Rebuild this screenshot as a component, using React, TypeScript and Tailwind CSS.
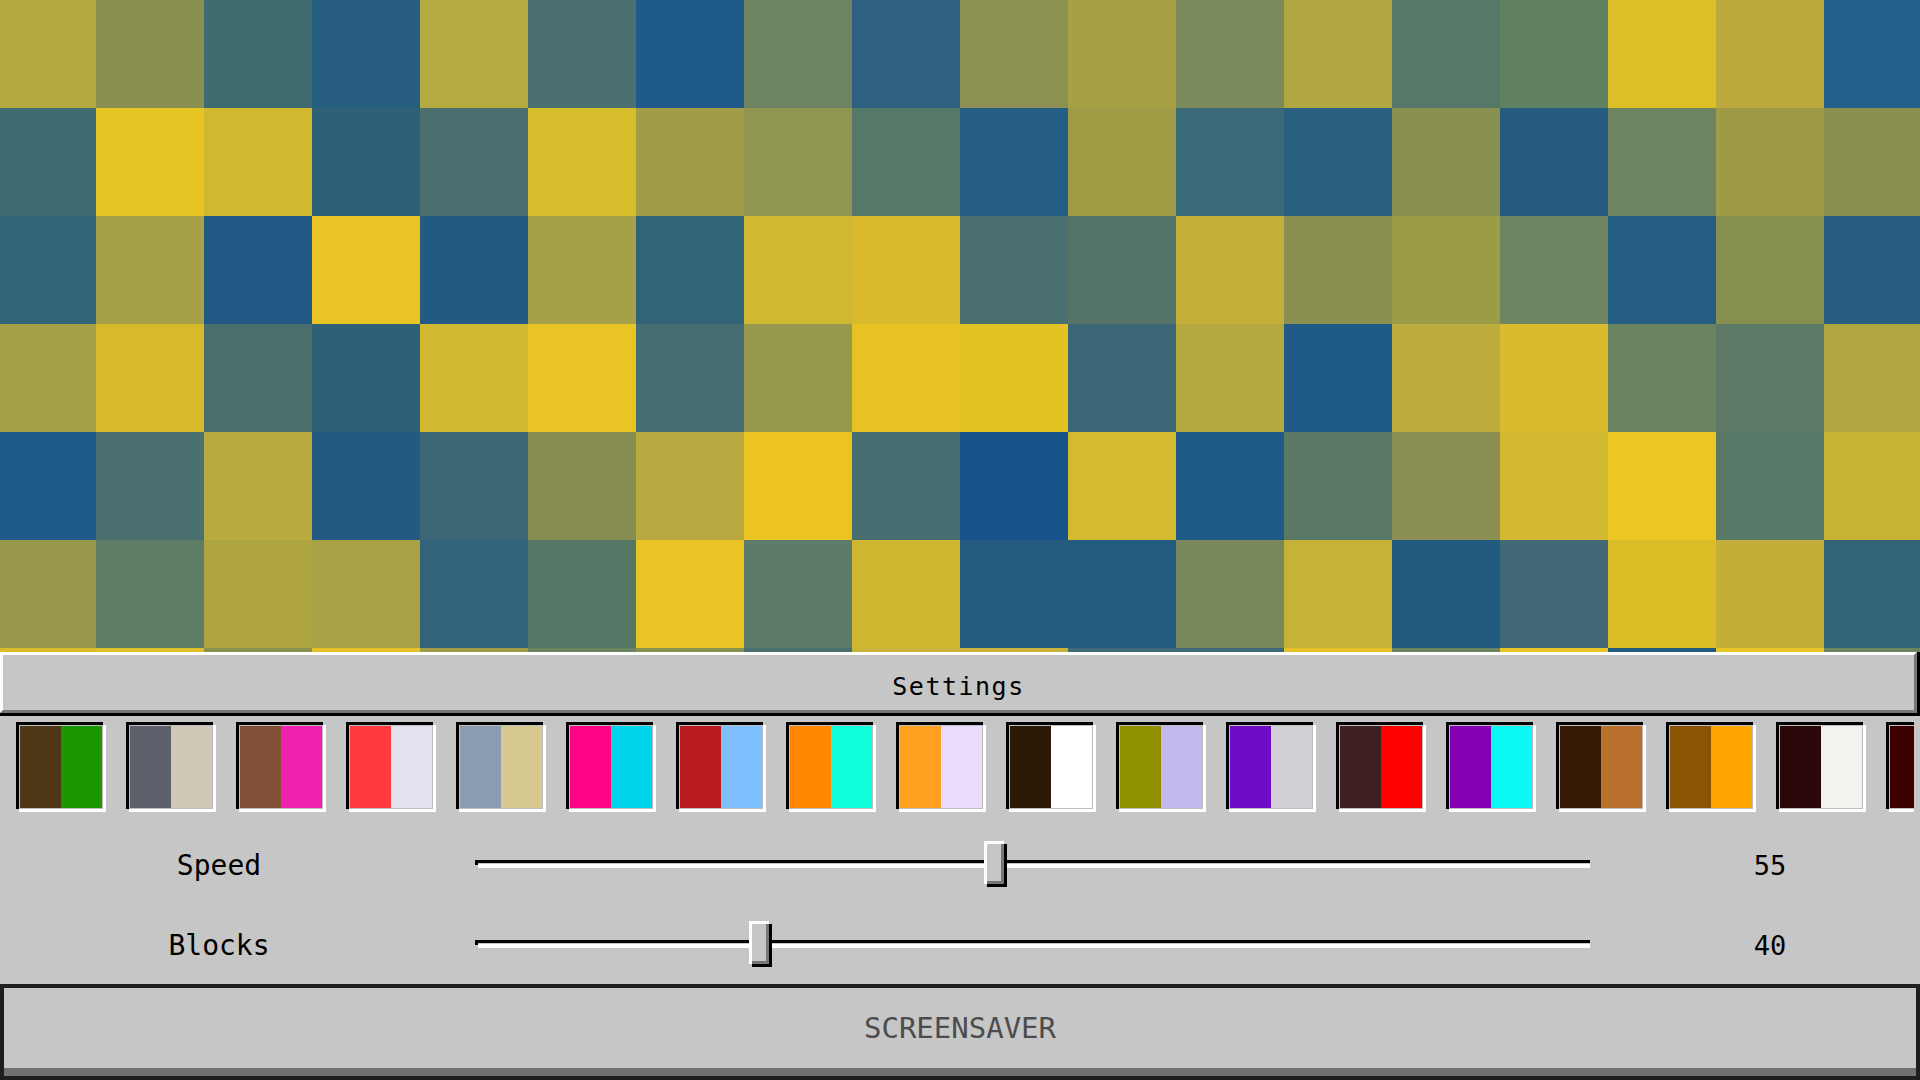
const TILES: string[][] = [
  ["#b3a840", "#8a9050", "#3e6a70", "#275d80", "#b3aa40", "#4a7070", "#1f5a88", "#6e8462", "#2e6080", "#8c9050", "#a8a045", "#7a8a5a", "#b0a642", "#567868", "#608060", "#ddbf28", "#bcab3c", "#25608a"],
  ["#3f6c72", "#e6c424", "#d0b830", "#2e6078", "#4c7070", "#d8bd2c", "#a09c48", "#909650", "#567868", "#255e84", "#a09c46", "#3a6a78", "#2a6080", "#8a9050", "#265c80", "#6e8460", "#a09a48", "#8a9050"],
  ["#306478", "#a6a048", "#205a84", "#eac424", "#225a84", "#a6a048", "#326478", "#d0b830", "#d8ba2c", "#4a7070", "#547468", "#c4b038", "#8a9050", "#9c9c48", "#6e8460", "#255e84", "#889050", "#2a5e80"],
  ["#a4a048", "#d6ba2c", "#4a706c", "#2e6078", "#d0b830", "#e8c424", "#466e72", "#96984c", "#e8c222", "#e4c224", "#3a6676", "#b4a840", "#205a86", "#bcac3c", "#d8bc2c", "#6a8460", "#5c7a66", "#b0a642"],
  ["#205a88", "#4a7070", "#b8aa3e", "#225a84", "#3c6674", "#888e52", "#b8aa40", "#ecc422", "#466e70", "#17528a", "#d4ba2e", "#1f5a86", "#5a7866", "#8a8e50", "#d2b830", "#ecc622", "#587868", "#c8b234"],
  ["#97974c", "#5f7e66", "#aea440", "#a8a244", "#33637a", "#557866", "#eac424", "#5e7b69", "#cfb830", "#245b80", "#245b80", "#78885a", "#c6b236", "#235b80", "#416a76", "#dcbd28", "#c2ae38", "#33647a"],
  ["#d8bc2c", "#e0c028", "#8a9050", "#e4c228", "#a09c46", "#6a8460", "#8a9050", "#4a7070", "#c8b238", "#c8b238", "#3f6a78", "#3e6a78", "#e4c228", "#6a8460", "#e8c424", "#245b80", "#e8c424", "#6e8460"],
]

const PALETTES: [string, string][] = [
  ["#4e3714", "#1a9600"],
  ["#5c616b", "#cfc9b5"],
  ["#834e36", "#f020b0"],
  ["#ff3b3f", "#e4e2ee"],
  ["#8a9db0", "#d6c88e"],
  ["#ff0484", "#00d3ec"],
  ["#b81c20", "#7fc0ff"],
  ["#ff8800", "#10ffdc"],
  ["#ffa020", "#eadcfc"],
  ["#2c1a06", "#ffffff"],
  ["#919100", "#c2b8ec"],
  ["#6e0cc6", "#d2d0d6"],
  ["#3e2022", "#ff0000"],
  ["#8400b4", "#0cf8f4"],
  ["#361a06", "#b8702c"],
  ["#8a5404", "#ffa400"],
  ["#2a080a", "#f2f2ee"],
  ["#3c0000", "#3c0000"],
]

function Swatch({ left, right }: { left: string; right: string }) {
  return (
    <div className="grid shrink-0 w-[90px] h-[90px]">
      <div className="[grid-area:1/1] w-[87px] h-[87px] bg-black" />
      <div className="[grid-area:1/1] w-[87px] h-[87px] bg-white self-end justify-self-end" />
      <div className="[grid-area:1/1] w-[84px] h-[84px] mt-[3px] ml-[3px] border border-[#bebebe] flex">
        <div className="flex-1" style={{ backgroundColor: left }} />
        <div className="flex-1" style={{ backgroundColor: right }} />
      </div>
    </div>
  )
}

function Slider({ label, value, offset }: { label: string; value: number; offset: number }) {
  return (
    <div className="flex items-center h-[46px]">
      <div className="w-[438px] pt-[4px] text-center text-[28px] leading-none text-black">{label}</div>
      {/* track */}
      <div className="relative ml-[37px] w-[1115px] h-[46px] flex items-center">
        <div className="flex flex-col w-full">
          <div className="h-[3px] bg-black" />
          <div className="h-[1px] w-[3px] bg-black" />
          <div className="h-[1px] flex">
            <div className="w-[3px] bg-black" />
            <div className="flex-1 bg-white" />
          </div>
          <div className="h-[3px] ml-[3px] bg-white" />
        </div>
        {/* thumb */}
        <div className="absolute top-0 grid w-[23px] h-[46px]" style={{ left: offset }}>
          <div className="[grid-area:1/1] w-[20px] h-[43px] bg-white" />
          <div className="[grid-area:1/1] w-[20px] h-[43px] bg-black self-end justify-self-end" />
          <div className="[grid-area:1/1] w-[17px] h-[40px] mt-[3px] ml-[3px] bg-[#c6c6c6] border-r-[3px] border-b-[3px] border-[#777777]" />
        </div>
      </div>
      <div className="ml-[90px] w-[180px] pt-[2px] text-center text-[27px] leading-none text-black">{value}</div>
    </div>
  )
}

export default function App() {
  return (
    <div className="w-[1920px] h-[1080px] overflow-hidden flex flex-col bg-[#c6c6c6] font-['DejaVu_Sans_Mono',monospace]">
      {/* block canvas */}
      <div className="h-[652px] shrink-0 overflow-hidden">
        <div className="-ml-[12px] grid grid-cols-[repeat(18,108px)] auto-rows-[108px] w-[1944px]">
          {TILES.flatMap((row, r) =>
            row.map((c, i) => <div key={`${r}-${i}`} style={{ backgroundColor: c }} />)
          )}
        </div>
      </div>

      {/* settings panel */}
      <div className="flex-1 flex flex-col">
        <div className="h-[64px] flex border-r-[3px] border-b-[3px] border-black">
          <div className="flex-1 flex items-center justify-center pt-[7px] border-[3px] border-t-white border-l-white border-r-[#777777] border-b-[#777777]">
            <span className="text-[25px] leading-none tracking-[1.5px] text-black">Settings</span>
          </div>
        </div>

        <div className="mt-[6px] mr-[6px] pl-[16px] flex gap-[20px] overflow-hidden">
          {PALETTES.map(([a, b], i) => (
            <Swatch key={i} left={a} right={b} />
          ))}
        </div>

        <div className="mt-[29px]">
          <Slider label="Speed" value={55} offset={509} />
        </div>
        <div className="mt-[34px]">
          <Slider label="Blocks" value={40} offset={274} />
        </div>

        <div className="mt-[17px] h-[96px] flex flex-col border-[4px] border-[#1e1e1e]">
          <div className="flex-1 flex items-center justify-center">
            <span className="text-[29px] leading-none text-[#4c4c4c]">SCREENSAVER</span>
          </div>
          <div className="h-[8px] bg-[#73716e]" />
        </div>
      </div>
    </div>
  )
}
